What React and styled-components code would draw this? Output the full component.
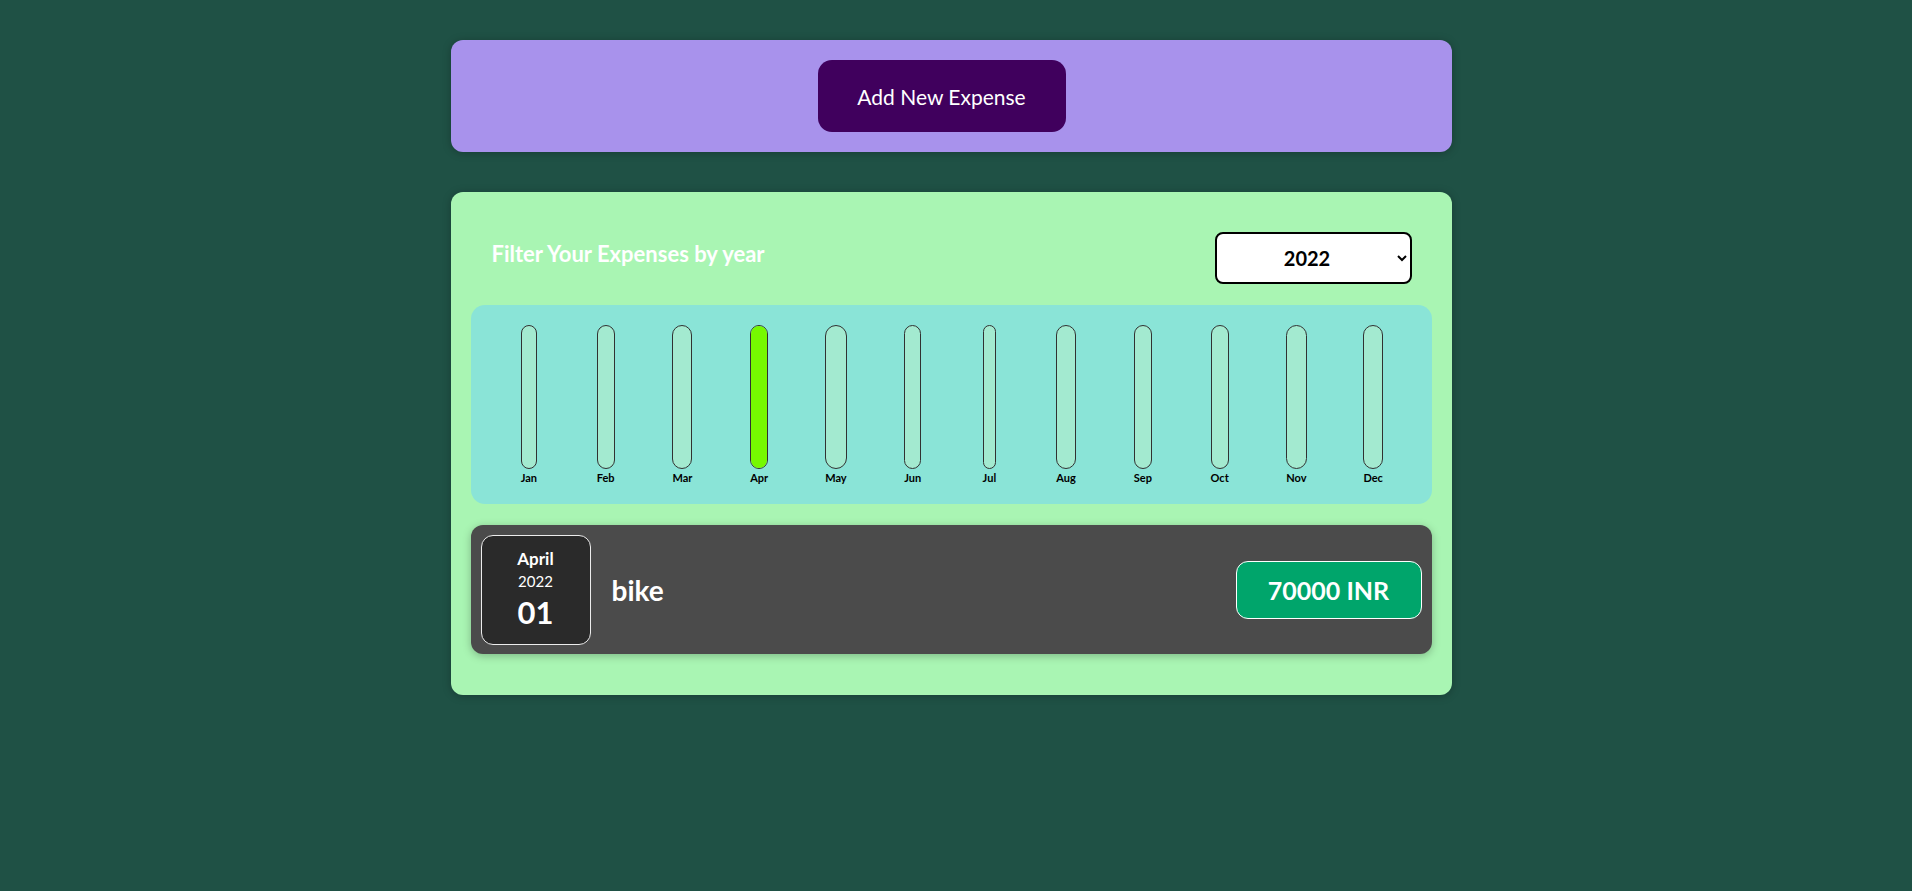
import React, { useState } from 'react';
import styled, { createGlobalStyle } from 'styled-components';

const GlobalStyle = createGlobalStyle`
    * {
        box-sizing: border-box;
    }
    body {
        margin: 0;
        background-color: #1f5145;
        font-family: Lato, "Liberation Sans", sans-serif;
    }
`;

const MONTHS = ['Jan', 'Feb', 'Mar', 'Apr', 'May', 'Jun', 'Jul', 'Aug', 'Sep', 'Oct', 'Nov', 'Dec'];

const expenses = [
    { id: 'e1', title: 'bike', amount: 70000, date: new Date(2022, 3, 1) },
];

const App = () => {
    const [year, setYear] = useState('2022');

    const filtered = expenses.filter((e) => e.date.getFullYear().toString() === year);
    const totals = MONTHS.map((m, i) =>
        filtered.filter((e) => e.date.getMonth() === i).reduce((s, e) => s + e.amount, 0)
    );
    const max = Math.max(...totals, 1);

    return (
        <Page>
            <GlobalStyle />
            <NewExpense>
                <AddButton>Add New Expense</AddButton>
            </NewExpense>

            <Expenses>
                <FilterRow>
                    <FilterLabel>Filter Your Expenses by year</FilterLabel>
                    <YearSelect value={year} onChange={(e) => setYear(e.target.value)}>
                        <option value="2022">2022</option>
                        <option value="2021">2021</option>
                        <option value="2020">2020</option>
                        <option value="2019">2019</option>
                    </YearSelect>
                </FilterRow>

                <Chart>
                    {MONTHS.map((m, i) => (
                        <ChartColumn key={m}>
                            <BarTrack>
                                <BarFill style={{ height: `${(totals[i] / max) * 100}%` }} />
                            </BarTrack>
                            <BarLabel>{m}</BarLabel>
                        </ChartColumn>
                    ))}
                </Chart>

                {filtered.map((e) => (
                    <ExpenseItem key={e.id}>
                        <DateBox>
                            <DateMonth>{e.date.toLocaleString('en-US', { month: 'long' })}</DateMonth>
                            <DateYear>{e.date.getFullYear()}</DateYear>
                            <DateDay>{e.date.toLocaleString('en-US', { day: '2-digit' })}</DateDay>
                        </DateBox>
                        <ItemTitle>{e.title}</ItemTitle>
                        <Price>{e.amount} INR</Price>
                    </ExpenseItem>
                ))}
            </Expenses>
        </Page>
    );
};

const Page = styled.div`
    min-height: 100vh;
    padding: 40px 10px 40px 0;
`;

const Panel = styled.div`
    width: 1001px;
    margin: 0 auto;
    border-radius: 12px;
    box-shadow: 0 1px 8px rgba(0, 0, 0, 0.25);
`;

const NewExpense = styled(Panel)`
    background-color: #a892ec;
    padding: 20px 39px 20px 20px;
    display: flex;
    justify-content: center;
`;

const AddButton = styled.button`
    width: 248px;
    height: 72px;
    border: none;
    border-radius: 14px;
    background-color: #40005d;
    color: #fff;
    font-family: inherit;
    font-size: 21px;
    cursor: pointer;
`;

const Expenses = styled(Panel)`
    margin-top: 40px;
    background-color: #a9f5b3;
    padding: 40px 20px 41px;
    display: flex;
    flex-direction: column;
    gap: 21px;
`;

const FilterRow = styled.div`
    display: flex;
    justify-content: space-between;
    align-items: center;
    padding: 0 20px 0 21px;
`;

const FilterLabel = styled.label`
    color: #fff;
    font-weight: bold;
    font-size: 22px;
    margin-top: -10px;
`;

const YearSelect = styled.select`
    width: 197px;
    height: 52px;
    border: 2px solid #000;
    border-radius: 8px;
    background-color: #fff;
    font-family: inherit;
    font-size: 20px;
    font-weight: bold;
    text-align: center;
    color: #000;
`;

const Chart = styled.div`
    display: grid;
    grid-template-columns: repeat(12, 1fr);
    padding: 20px;
    border-radius: 14px;
    background-color: #8ae4d7;
`;

const ChartColumn = styled.div`
    justify-self: center;
    display: flex;
    flex-direction: column;
    align-items: stretch;
`;

const BarTrack = styled.div`
    height: 144px;
    border: 1px solid #313131;
    border-radius: 12px;
    background-color: #a3ead0;
    overflow: hidden;
    display: flex;
    flex-direction: column;
    justify-content: flex-end;
`;

const BarFill = styled.div`
    width: 100%;
    background-color: #76f900;
`;

const BarLabel = styled.div`
    font-size: 11px;
    font-weight: bold;
    text-align: center;
    color: #000;
    margin-top: 2px;
`;

const ExpenseItem = styled.div`
    display: flex;
    align-items: center;
    padding: 10px 10px 9px;
    border-radius: 12px;
    background-color: #4b4b4b;
    box-shadow: 0 2px 8px rgba(0, 0, 0, 0.25);
`;

const DateBox = styled.div`
    width: 110px;
    height: 110px;
    border: 1px solid #ececec;
    border-radius: 12px;
    background-color: #2a2a2a;
    color: #fff;
    display: flex;
    flex-direction: column;
    align-items: center;
    justify-content: center;
`;

const DateMonth = styled.div`
    font-size: 17px;
    font-weight: bold;
    line-height: 1.2;
`;

const DateYear = styled.div`
    font-size: 15px;
    line-height: 1.2;
    margin-top: 3px;
`;

const DateDay = styled.div`
    font-size: 31px;
    font-weight: bold;
    line-height: 1.2;
    margin-top: 4px;
`;

const ItemTitle = styled.h2`
    flex: 1;
    margin: 0 0 0 21px;
    color: #fff;
    font-size: 28px;
    font-weight: bold;
`;

const Price = styled.div`
    width: 186px;
    height: 58px;
    border: 1px solid #fff;
    border-radius: 12px;
    background-color: #00a56b;
    color: #fff;
    font-size: 25px;
    font-weight: bold;
    display: flex;
    align-items: center;
    justify-content: center;
`;

export default App;
